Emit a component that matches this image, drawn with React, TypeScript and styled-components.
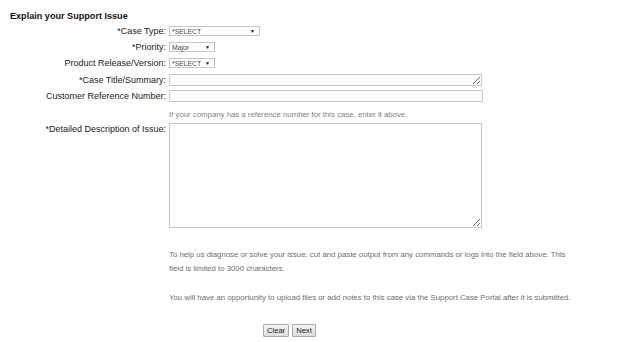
import styled, { createGlobalStyle } from 'styled-components';

const GlobalStyle = createGlobalStyle`
  html, body {
    margin: 0;
    padding: 0;
    background: #ffffff;
  }
  body {
    font-family: 'Liberation Sans', Arial, sans-serif;
    color: #222;
  }
`;

interface SelectProps {
  value: string;
  width: number;
}

const FakeSelect = ({ value, width }: SelectProps) => (
  <SelectBox style={{ width }}>
    <span>{value}</span>
    <Arrow>▼</Arrow>
  </SelectBox>
);

const App = () => {
  return (
    <>
      <GlobalStyle />
      <Page>
        <Heading>Explain your Support Issue</Heading>
        <Form>
          <Row>
            <Label>*Case Type:</Label>
            <FakeSelect value="*SELECT" width={91} />
          </Row>
          <Row>
            <Label>*Priority:</Label>
            <FakeSelect value="Major" width={46} />
          </Row>
          <Row>
            <Label>Product Release/Version:</Label>
            <FakeSelect value="*SELECT" width={46} />
          </Row>
          <Row $tall>
            <Label>*Case Title/Summary:</Label>
            <SmallArea rows={1} />
          </Row>
          <Row $tall>
            <Label>Customer Reference Number:</Label>
            <TextInput type="text" />
          </Row>
          <HelpRow>
            <Help>If your company has a reference number for this case, enter it above.</Help>
          </HelpRow>
          <DescRow>
            <Label $top>*Detailed Description of Issue:</Label>
            <BigArea />
          </DescRow>
          <Notes>
            <Note>
              To help us diagnose or solve your issue, cut and paste output from any commands or logs into the field
              above. This field is limited to 3000 characters.
            </Note>
            <Note>
              You will have an opportunity to upload files or add notes to this case via the Support Case Portal after
              it is submitted.
            </Note>
          </Notes>
          <Buttons>
            <Button type="button">Clear</Button>
            <Button type="button">Next</Button>
          </Buttons>
        </Form>
      </Page>
    </>
  );
};

export default App;

const Page = styled.div`
  width: 624px;
  height: 342px;
  box-sizing: border-box;
  padding: 10px 0 0 10px;
  overflow: hidden;
`;

const Heading = styled.div`
  font-size: 9.1px;
  font-weight: 700;
  line-height: 12px;
  color: #111;
`;

const Form = styled.div`
  display: flex;
  flex-direction: column;
  margin-top: 4px;
  margin-left: -10px;
`;

const Row = styled.div<{ $tall?: boolean }>`
  display: flex;
  align-items: center;
  height: ${({ $tall }) => ($tall ? '12px' : '10px')};
  margin-bottom: ${({ $tall }) => ($tall ? '4px' : '6px')};
`;

const Label = styled.div<{ $top?: boolean }>`
  width: 169px;
  flex-shrink: 0;
  padding-right: 3px;
  box-sizing: border-box;
  text-align: right;
  font-size: 9px;
  line-height: 12px;
  color: #1a1a1a;
  align-self: ${({ $top }) => ($top ? 'flex-start' : 'center')};
  white-space: nowrap;
`;

const SelectBox = styled.div`
  height: 10px;
  box-sizing: border-box;
  border: 1px solid #c4c4c4;
  background: #fff;
  display: flex;
  align-items: center;
  justify-content: space-between;
  padding: 0 4px 0 2px;
  font-size: 6.8px;
  color: #444;
`;

const Arrow = styled.span`
  font-size: 5px;
  color: #111;
`;

const fieldBase = `
  box-sizing: border-box;
  border: 1px solid #c6c6c6;
  background: #fff;
  margin: 0;
  padding: 0;
  font-family: 'Liberation Sans', Arial, sans-serif;
  font-size: 8px;
  outline: none;
`;

const SmallArea = styled.textarea`
  ${fieldBase}
  width: 313px;
  height: 12px;
  resize: both;
`;

const TextInput = styled.input`
  ${fieldBase}
  width: 314px;
  height: 12px;
`;

const HelpRow = styled.div`
  padding-left: 169px;
  height: 14px;
  margin-top: 1px;
  display: flex;
  align-items: center;
`;

const Help = styled.span`
  font-size: 7.8px;
  color: #808080;
  white-space: nowrap;
`;

const DescRow = styled.div`
  display: flex;
  margin-top: 2px;
`;

const BigArea = styled.textarea`
  ${fieldBase}
  width: 313px;
  height: 105px;
  resize: both;
`;

const Notes = styled.div`
  padding-left: 169px;
  width: 576px;
  box-sizing: border-box;
  margin-top: 20px;
  display: flex;
  flex-direction: column;
  gap: 15px;
`;

const Note = styled.p`
  margin: 0;
  font-size: 7.8px;
  line-height: 14px;
  color: #6e6e6e;
`;

const Buttons = styled.div`
  display: flex;
  gap: 3px;
  padding-left: 263px;
  margin-top: 19px;
`;

const Button = styled.button`
  height: 13px;
  box-sizing: border-box;
  padding: 0 3px;
  border: 1px solid #a9a9a9;
  border-radius: 1px;
  background: linear-gradient(#f2f2f2, #dedede);
  font-family: 'Liberation Sans', Arial, sans-serif;
  font-size: 7.6px;
  color: #222;
  line-height: 11px;
  cursor: pointer;
`;
